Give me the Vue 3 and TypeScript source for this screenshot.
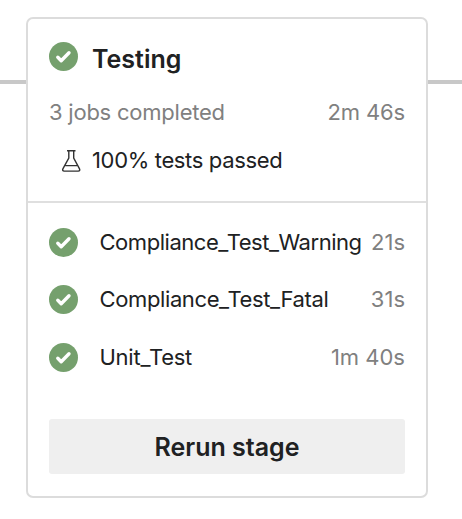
<script setup lang="ts">
interface Job {
  name: string
  duration: string
  kind: string
}

const jobs: Job[] = [
  { name: 'Compliance_Test_Warning', duration: '21s', kind: 'warning' },
  { name: 'Compliance_Test_Fatal', duration: '31s', kind: 'fatal' },
  { name: 'Unit_Test', duration: '1m 40s', kind: 'unit' },
]
</script>

<template>
  <main class="pipeline">
    <div class="connector left"></div>
    <section class="card">
      <header class="summary">
        <div class="title-row">
          <svg class="status" viewBox="0 0 29 29">
            <circle cx="14.5" cy="14.5" r="14.5" />
            <path d="M8.8 15.3l3.4 3.4 7.8-7.900" />
          </svg>
          <h1 class="title">Testing</h1>
        </div>
        <div class="meta-row">
          <span class="completed">3 jobs completed</span>
          <span class="total">2m 46s</span>
        </div>
        <div class="tests-row">
          <svg class="flask" viewBox="0 0 20 24">
            <path d="M6 1.700h8.500M7.800 1.700v7.300L2 19.600c-.8 1.500-.3 2.500 1.200 2.500h14c1.500 0 2-1 1.200-2.500L12.700 9v-7.300M4.300 16.600h11.800" />
          </svg>
          <span class="tests">100% tests passed</span>
        </div>
      </header>
      <ul class="jobs">
        <li v-for="job in jobs" :key="job.name" class="job">
          <svg class="status" viewBox="0 0 29 29">
            <circle cx="14.5" cy="14.5" r="14.5" />
            <path d="M8.8 15.3l3.4 3.4 7.8-7.900" />
          </svg>
          <span class="name" :class="job.kind">{{ job.name }}</span>
          <span class="duration" :class="job.kind">{{ job.duration }}</span>
        </li>
      </ul>
      <button class="rerun" type="button"><span class="label">Rerun stage</span></button>
    </section>
    <div class="connector right"></div>
  </main>
</template>

<style>
body {
  background: #fff;
}
</style>

<style scoped>
.pipeline {
  display: flex;
  align-items: flex-start;
  box-sizing: border-box;
  width: 462px;
  height: 519px;
  padding-top: 17px;
  overflow: hidden;
  color: #202122;
  font-family: Inter, "Liberation Sans", sans-serif;
  font-size: 22px;
  white-space: nowrap;
}

.connector {
  height: 3.5px;
  margin-top: 63px;
  background: #c8c8c8;
}

.left {
  width: 26px;
}

.right {
  flex: 1;
}

.card {
  box-sizing: border-box;
  width: 402px;
  height: 481px;
  border: 2px solid #dcdcdc;
  border-radius: 7px;
  background: #fff;
}

.summary {
  box-sizing: border-box;
  height: 184px;
  padding: 14px 21px 0;
  border-bottom: 2px solid #dfdfdf;
}

.title-row {
  display: flex;
  align-items: center;
  height: 48px;
}

.status {
  flex: none;
  width: 29px;
  height: 29px;
}

.title-row .status {
  margin-top: -2px;
}

.status circle {
  fill: #75a06d;
}

.status path {
  fill: none;
  stroke: #fff;
  stroke-width: 3.4;
  stroke-linecap: round;
  stroke-linejoin: round;
}

.title {
  margin: 4px 0 0 14px;
  font-size: 25px;
  font-weight: 600;
  line-height: 30px;
}

.meta-row {
  display: flex;
  align-items: center;
  justify-content: space-between;
  height: 62px;
  color: #808080;
}

.completed {
  letter-spacing: -0.23px;
}

.total {
  letter-spacing: -0.15px;
}

.tests-row {
  display: flex;
  align-items: center;
  height: 36px;
  padding-left: 11.5px;
}

.flask {
  width: 20px;
  height: 24px;
  fill: none;
  stroke: #333;
  stroke-width: 1.4;
}

.tests {
  margin: -2px 0 0 11.5px;
  letter-spacing: -0.35px;
}

.jobs {
  margin: 0;
  padding: 10px 21px 0;
  list-style: none;
}

.job {
  display: flex;
  align-items: center;
  height: 57.6px;
}

.job .status {
  margin-top: 1px;
}

.name {
  margin-left: 21.5px;
}

.warning.name {
  letter-spacing: -0.46px;
}

.fatal.name {
  letter-spacing: -0.38px;
}

.unit.name {
  letter-spacing: -0.25px;
}

.duration {
  margin-left: auto;
  color: #808080;
}

.rerun {
  display: block;
  width: 356px;
  height: 55.5px;
  margin: 33px 21px 0;
  padding: 0;
  border: 0;
  border-radius: 3px;
  background: #efefef;
  color: #202122;
  font: 600 25px/57px Inter, "Liberation Sans", sans-serif;
}
</style>
